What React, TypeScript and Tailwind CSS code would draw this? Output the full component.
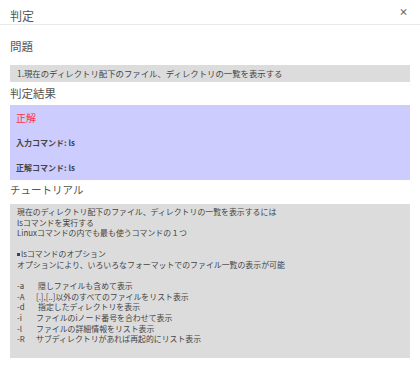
import React from "react";

const font = { fontFamily: '"Noto Sans CJK JP", "Noto Sans", sans-serif' };

const options: [string, string, boolean][] = [
  ["-a", "隠しファイルも含めて表示", true],
  ["-A", "[.],[..]以外のすべてのファイルをリスト表示", false],
  ["-d", "指定したディレクトリを表示", true],
  ["-i", "ファイルのiノード番号を合わせて表示", false],
  ["-l", "ファイルの詳細情報をリスト表示", false],
  ["-R", "サブディレクトリがあれば再起的にリスト表示", false],
];

export default function App() {
  return (
    <div className="w-[420px] h-[367px] bg-white overflow-hidden" style={font}>
      <div className="h-[25px] pt-[8px] border-b border-[#e8e8e8] flex items-center justify-between pl-[10px] pr-[12px]">
        <span className="text-[12px] leading-[16px] text-[#555]">判定</span>
        <span className="text-[9px] leading-[10px] font-bold text-[#666] mb-[9px]">×</span>
      </div>
      <div className="px-[10px] flex flex-col">
        <div className="mt-[13px] text-[11.5px] leading-[16px] text-[#555]">問題</div>
        <div className="mt-[11px] h-[17px] bg-[#dcdcdc] flex items-center px-[7px] text-[8.4px] text-[#444]">
          1.現在のディレクトリ配下のファイル、ディレクトリの一覧を表示する
        </div>
        <div className="mt-[3px] text-[11.5px] leading-[16px] text-[#555]">判定結果</div>
        <div className="mt-[4px] h-[75px] bg-[#ccccff] flex flex-col px-[6px] pt-[6px]">
          <div className="text-[10px] leading-[14px] text-[#ff3344]">正解</div>
          <div className="mt-[12px] text-[8px] leading-[12px] font-bold text-[#444]">入力コマンド: ls</div>
          <div className="mt-[13px] text-[8px] leading-[12px] font-bold text-[#444]">正解コマンド: ls</div>
        </div>
        <div className="mt-[2px] text-[10.5px] leading-[16px] text-[#555]">チュートリアル</div>
        <div className="mt-[6px] h-[154px] bg-[#dcdcdc] px-[7px] pt-[3px] text-[7.9px] leading-[10.6px] text-[#444]">
          <div>現在のディレクトリ配下のファイル、ディレクトリの一覧を表示するには</div>
          <div>lsコマンドを実行する</div>
          <div>Linuxコマンドの内でも最も使うコマンドの１つ</div>
          <div className="h-[10.6px]"></div>
          <div className="flex items-center">
            <span className="inline-block w-[3px] h-[3px] bg-[#444] mr-[1px]"></span>
            <span>lsコマンドのオプション</span>
          </div>
          <div>オプションにより、いろいろなフォーマットでのファイル一覧の表示が可能</div>
          <div className="h-[10.6px]"></div>
          {options.map(([k, d, extra]) => (
            <div key={k} className="flex">
              <span className="w-[19px] shrink-0">{k}</span>
              <span className={extra ? "pl-[2px]" : ""}>{d}</span>
            </div>
          ))}
        </div>
      </div>
    </div>
  );
}
